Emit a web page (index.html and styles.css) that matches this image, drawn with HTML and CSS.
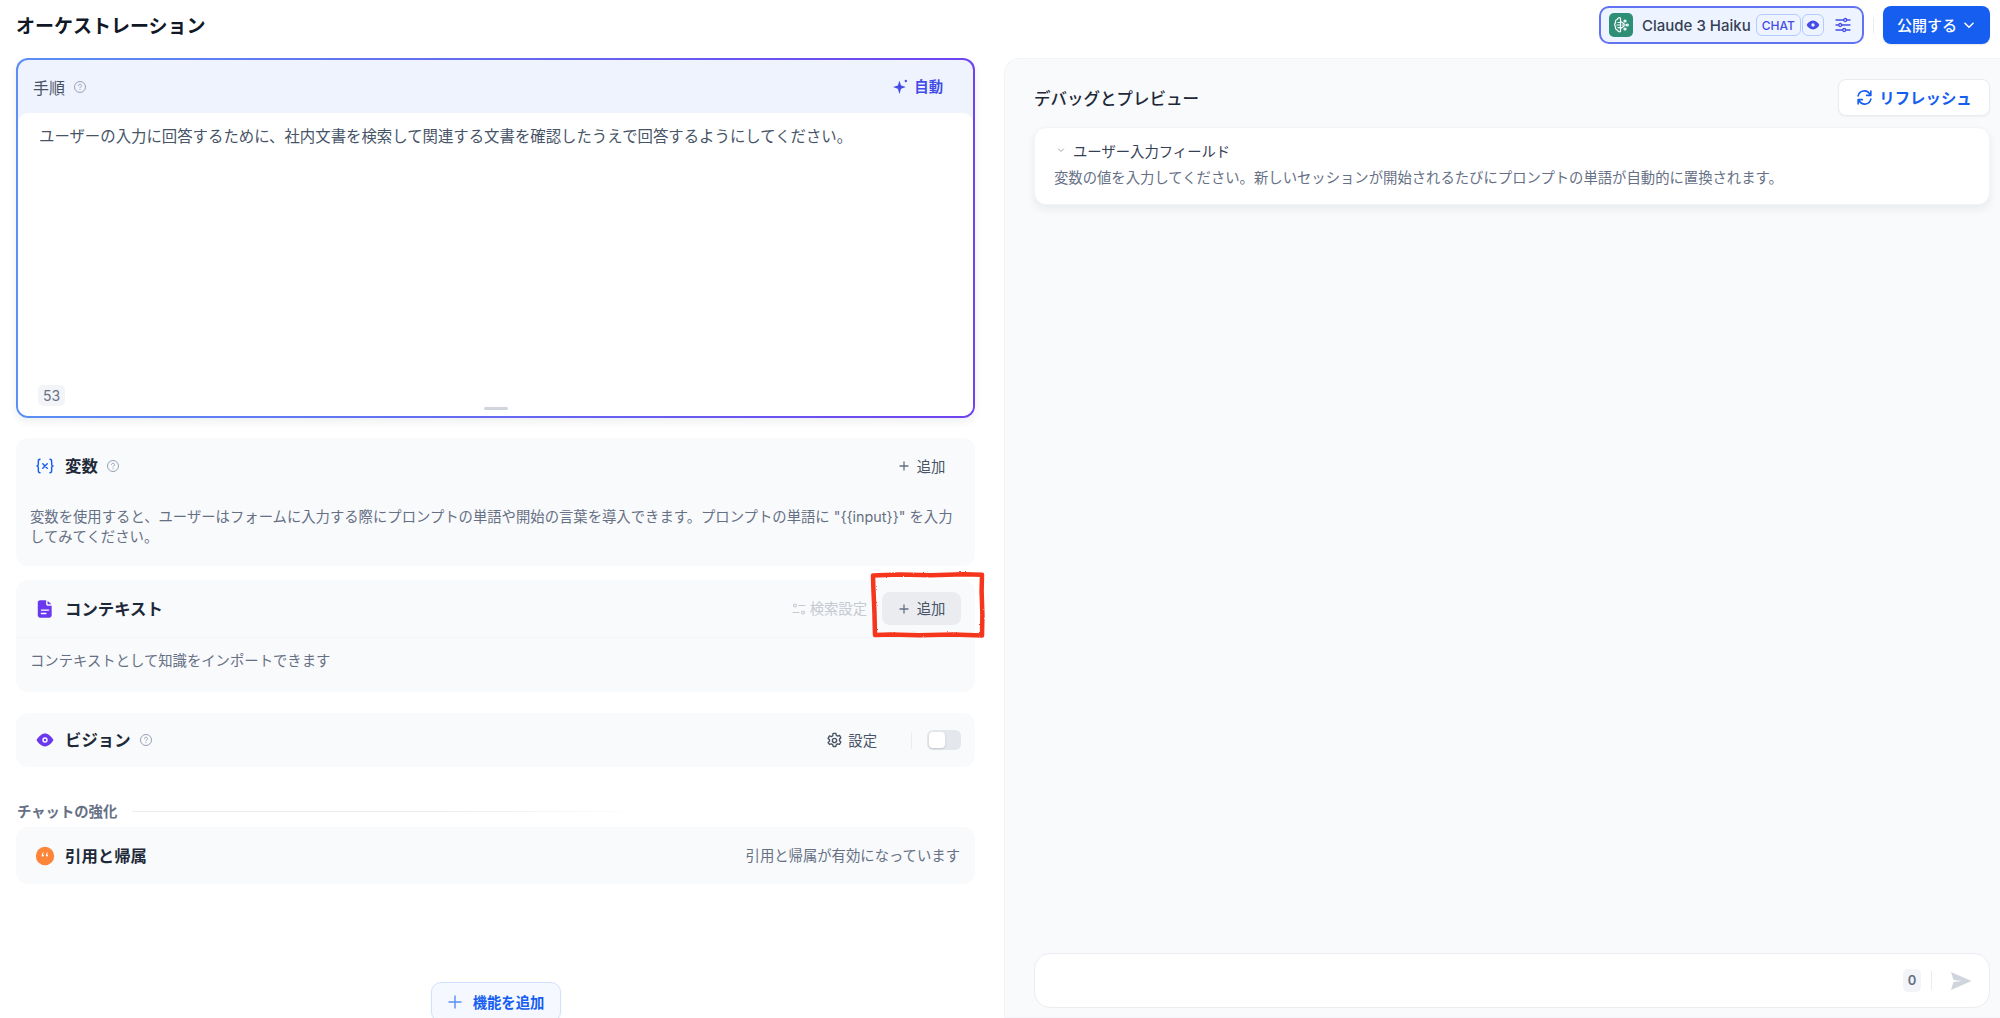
FILE: index.html
```html
<!DOCTYPE html>
<html lang="ja">
<head>
  <meta charset="utf-8">
  <title>オーケストレーション</title>
  <link rel="stylesheet" href="styles.css">
</head>
<body>
  <header class="topbar">
    <h1 class="page-title">オーケストレーション</h1>
    <div class="topbar-actions">
      <div class="model-pill">
        <span class="model-logo">
          <svg width="20" height="20" viewBox="0 0 20 20" fill="none" stroke="#fff" stroke-width="1.200" stroke-linecap="round" stroke-linejoin="round">
            <path d="M9.500 3C8 2.300 6.500 3 6.300 4.500 4.700 4.800 4 6.300 4.700 7.600 3.400 8.600 3.400 10.800 4.700 11.800 4 13.300 5 15 6.500 15c.4 1.500 2 2.200 3 1.500z"/>
            <path d="M7 7.500h2.500M6 10h3.500M7 12.700h2.500"/>
            <path d="M9.500 6.500 13 8.800M9.500 13.500 13 11.200M11 10h4"/>
            <circle cx="14" cy="6" r="1"/><circle cx="16.300" cy="10" r="1"/><circle cx="14" cy="14" r="1"/>
          </svg>
        </span>
        <span class="model-name">Claude 3 Haiku</span>
        <span class="model-tag">CHAT</span>
        <span class="model-tag model-tag-icon">
          <svg width="14" height="14" viewBox="0 0 14 14"><path fill="#444ce7" fill-rule="evenodd" d="M7 2.500c3 0 5.200 2.200 6.300 4.500-1.100 2.300-3.300 4.500-6.300 4.500S1.800 9.300.7 7C1.800 4.700 4 2.500 7 2.500zM7 5.300a1.700 1.700 0 1 0 0 3.400 1.700 1.700 0 0 0 0-3.400z"/></svg>
        </span>
        <svg class="model-sliders" width="16" height="16" viewBox="0 0 16 16" fill="none" stroke="#444ce7" stroke-width="1.300" stroke-linecap="round">
          <path d="M1 3h7.500M12 3h3M1 8h2.500M7 8h8M1 13h6.500M11 13h4"/>
          <circle cx="10.200" cy="3" r="1.500"/><circle cx="5.200" cy="8" r="1.500"/><circle cx="9.200" cy="13" r="1.500"/>
        </svg>
      </div>
      <span class="topbar-divider"></span>
      <button class="publish-btn"><span class="btn-text">公開する</span>
        <svg width="14" height="14" viewBox="0 0 12 12" fill="none" stroke="#fff" stroke-width="1.300" stroke-linecap="round" stroke-linejoin="round"><path d="M2.500 4.500 6 8l3.500-3.500"/></svg>
      </button>
    </div>
  </header>

  <main class="layout">
    <section class="config">
      <div class="prompt">
        <div class="prompt-inner">
          <div class="prompt-head">
            <span class="prompt-title">手順</span>
            <svg class="help" width="14" height="14" viewBox="0 0 14 14" fill="none" stroke="#98a2b3" stroke-width="1"><circle cx="7" cy="7" r="5.500"/><path d="M5.500 5.600C5.600 4.700 6.200 4.300 7 4.300c.9 0 1.500.5 1.500 1.300 0 1.200-1.500 1.200-1.500 2.300" stroke-linecap="round"/><path d="M7 9.700v.1" stroke-linecap="round"/></svg>
            <span class="auto-btn">
              <svg width="17" height="17" viewBox="0 0 16 16" fill="#444ce7"><path d="M7 2.500 8.500 7 13 8.500 8.500 10 7 15 5.500 10 1 8.500 5.500 7z"/><circle cx="13" cy="2.800" r="1.100"/></svg>
              <span class="btn-text">自動</span>
            </span>
          </div>
          <div class="prompt-body">
            <p class="prompt-text">ユーザーの入力に回答するために、社内文書を検索して関連する文書を確認したうえで回答するようにしてください。</p>
            <div class="prompt-foot">
              <span class="count">53</span>
            </div>
            <span class="drag-handle"></span>
          </div>
        </div>
      </div>

      <div class="card card-vars">
        <div class="card-head">
          <svg class="card-icon" width="20" height="20" viewBox="0 0 18 18" fill="none" stroke="#155eef" stroke-width="1.300" stroke-linecap="round" stroke-linejoin="round">
            <path d="M4.500 3C3 3 3 3.800 3 5v2.500C3 8.500 2.500 9 1.800 9c.7 0 1.200.5 1.200 1.500V13c0 1.200 0 2 1.500 2"/>
            <path d="M13.500 3C15 3 15 3.800 15 5v2.500c0 1 .5 1.500 1.200 1.500-.7 0-1.200.5-1.200 1.500V13c0 1.200 0 2-1.500 2"/>
            <path d="m7 7 4 4M11 7l-4 4"/>
          </svg>
          <span class="card-title">変数</span>
          <svg class="help" width="14" height="14" viewBox="0 0 14 14" fill="none" stroke="#98a2b3" stroke-width="1"><circle cx="7" cy="7" r="5.500"/><path d="M5.500 5.600C5.600 4.700 6.200 4.300 7 4.300c.9 0 1.500.5 1.500 1.300 0 1.200-1.500 1.200-1.500 2.300" stroke-linecap="round"/><path d="M7 9.700v.1" stroke-linecap="round"/></svg>
          <span class="add-btn">
            <svg width="12" height="12" viewBox="0 0 12 12" fill="none" stroke="#667085" stroke-width="1.300" stroke-linecap="round"><path d="M6 2v8M2 6h8"/></svg>
            <span class="btn-text">追加</span>
          </span>
        </div>
        <p class="card-desc card-desc-vars">変数を使用すると、ユーザーはフォームに入力する際にプロンプトの単語や開始の言葉を導入できます。プロンプトの単語に "{{input}}" を入力してみてください。</p>
      </div>

      <div class="card card-context">
        <div class="card-head card-head-line">
          <svg class="card-icon" width="20" height="20" viewBox="0 0 18 18">
            <path fill="#6938ef" d="M4.500 1.200H10v3.300c0 .9.700 1.600 1.600 1.600h3.400v8.600c0 1.100-.9 2.100-2 2.100H4.500c-1.100 0-2-1-2-2.100V3.200c0-1.100.9-2 2-2z"/>
            <path fill="#6938ef" d="M11.300 1.500 14.700 4.700h-2.900c-.3 0-.5-.2-.5-.5z"/>
            <path stroke="#fff" stroke-width="1.300" stroke-linecap="round" d="M5.800 10h6.400M5.800 13h4"/>
          </svg>
          <span class="card-title">コンテキスト</span>
          <span class="search-settings">
            <svg width="16" height="16" viewBox="0 0 16 16" fill="none" stroke="#c4c9d2" stroke-width="1.200" stroke-linecap="round"><circle cx="4" cy="4.500" r="1.500"/><path d="M8 4.500h6M2 11.500h6"/><circle cx="12" cy="11.500" r="1.500"/></svg>
            <span class="btn-text">検索設定</span>
          </span>
          <span class="add-btn add-btn-hover">
            <svg width="12" height="12" viewBox="0 0 12 12" fill="none" stroke="#667085" stroke-width="1.300" stroke-linecap="round"><path d="M6 2v8M2 6h8"/></svg>
            <span class="btn-text">追加</span>
          </span>
          <svg class="highlight" width="117" height="68" viewBox="0 0 117 68" fill="none" stroke="#f5341a" stroke-width="4.500" stroke-linejoin="round">
            <defs>
              <filter id="rough"><feTurbulence type="fractalNoise" baseFrequency=".7" numOctaves="2" seed="4"/><feDisplacementMap in="SourceGraphic" scale="2"/></filter>
            </defs>
            <path filter="url(#rough)" d="M4 4.500 30 3.500 62 4.200 95 3.300 113 3.800 112.600 20 113.400 44 113 64.500 84 63.600 50 64.200 22 63.400 6 64 5.400 40 4.400 18z"/>
          </svg>
        </div>
        <p class="card-desc">コンテキストとして知識をインポートできます</p>
      </div>

      <div class="card card-vision">
        <svg class="card-icon" width="20" height="20" viewBox="0 0 20 20"><path fill="#6938ef" fill-rule="evenodd" d="M10 3.500c1.600 0 2.800.6 4 1.400 1.800 1.200 3.300 2.900 4.500 5.100-1.200 2.200-2.700 3.900-4.500 5.100-1.200.8-2.400 1.400-4 1.400s-2.800-.6-4-1.400C4.200 13.900 2.700 12.200 1.500 10 2.700 7.800 4.200 6.100 6 4.900c1.200-.8 2.400-1.400 4-1.400zM10 7.300a2.700 2.700 0 1 0 0 5.400 2.700 2.700 0 0 0 0-5.400z"/><circle cx="10" cy="10" r="1.200" fill="#6938ef"/></svg>
        <span class="card-title">ビジョン</span>
        <svg class="help" width="14" height="14" viewBox="0 0 14 14" fill="none" stroke="#98a2b3" stroke-width="1"><circle cx="7" cy="7" r="5.500"/><path d="M5.500 5.600C5.600 4.700 6.200 4.300 7 4.300c.9 0 1.500.5 1.500 1.300 0 1.200-1.500 1.200-1.500 2.300" stroke-linecap="round"/><path d="M7 9.700v.1" stroke-linecap="round"/></svg>
        <span class="vision-settings">
          <svg width="17" height="17" viewBox="0 0 16 16" fill="none" stroke="#475467" stroke-width="1.300" stroke-linejoin="round"><path d="M6.700 1.300h2.600l.4 1.800 1.300.7 1.700-.6 1.300 2.300-1.300 1.200v1.500l1.300 1.200-1.300 2.300-1.700-.6-1.300.7-.4 1.800H6.700l-.4-1.800-1.300-.7-1.700.6L2 9.900l1.300-1.200V7.200L2 6l1.300-2.300 1.700.6 1.300-.7z"/><circle cx="8" cy="8" r="2"/></svg>
          <span class="btn-text">設定</span>
        </span>
        <span class="vision-divider"></span>
        <span class="toggle"><span class="toggle-thumb"></span></span>
      </div>

      <div class="section-label">
        <span class="btn-text">チャットの強化</span>
        <span class="section-line"></span>
      </div>

      <div class="card card-citation">
        <svg class="card-icon" width="20" height="20" viewBox="0 0 20 20"><circle cx="10" cy="10" r="9.200" fill="#fd853a"/><path fill="#fff" d="M8.700 5.800c-1 .9-2 2.200-2 3.500 0 .8.500 1.300 1.100 1.300.6 0 1-.4 1-1 0-.6-.4-1-.9-1 .1-.7.400-1.700.8-2.800zM12.900 5.800c-1 .9-2 2.200-2 3.500 0 .8.500 1.300 1.100 1.300.6 0 1-.4 1-1 0-.6-.4-1-.9-1 .1-.7.400-1.700.8-2.800z"/></svg>
        <span class="card-title">引用と帰属</span>
        <span class="citation-note btn-text">引用と帰属が有効になっています</span>
      </div>

      <button class="add-feature">
        <svg width="16" height="16" viewBox="0 0 16 16" fill="none" stroke="#5a8ef5" stroke-width="1.400" stroke-linecap="round"><path d="M8 2v12M2 8h12"/></svg>
        <span class="btn-text">機能を追加</span>
      </button>
    </section>

    <section class="debug">
      <div class="debug-head">
        <h2 class="debug-title">デバッグとプレビュー</h2>
        <button class="refresh-btn">
          <svg width="17" height="17" viewBox="0 0 16 16" fill="none" stroke="#155eef" stroke-width="1.500" stroke-linecap="round" stroke-linejoin="round"><path d="M2 6.500A6 6 0 0 1 12.800 4.400L14 6M14 2v4h-4M14 9.500A6 6 0 0 1 3.200 11.600L2 10M2 14v-4h4"/></svg>
          <span class="btn-text">リフレッシュ</span>
        </button>
      </div>
      <div class="inputs-card">
        <div class="inputs-head">
          <svg width="12" height="12" viewBox="0 0 12 12" fill="none" stroke="#98a2b3" stroke-width="1" stroke-linecap="round" stroke-linejoin="round"><path d="M3.500 5 6 7.500 8.500 5"/></svg>
          <span>ユーザー入力フィールド</span>
        </div>
        <p class="inputs-desc">変数の値を入力してください。新しいセッションが開始されるたびにプロンプトの単語が自動的に置換されます。</p>
      </div>
      <div class="chat-box">
        <span class="chat-count">0</span>
        <span class="chat-divider"></span>
        <svg width="22" height="20" viewBox="0 0 22 20"><path fill="#d0d5dd" d="M1 1 21.500 10 1 19 3.500 10.900 12 10 3.500 9.100z"/></svg>
      </div>
    </section>
  </main>
</body>
</html>
```

FILE: styles.css
```css
* {
  box-sizing: border-box;
}
html, body {
  height: 100%;
  margin: 0;
  overflow: hidden;
}
body {
  background: #fff;
  color: #354052;
  font-family: Inter, "Noto Sans CJK JP", sans-serif;
  font-size: 14.35px;
  display: flex;
  flex-direction: column;
}
button {
  font-family: inherit;
  cursor: pointer;
}
p, h1, h2 {
  margin: 0;
}
/* the CJK glyphs sit a little low in the line box */
.btn-text {
  position: relative;
  top: -1px;
}

/* top bar */
.topbar {
  height: 58px;
  flex: none;
  display: flex;
  align-items: center;
  justify-content: space-between;
  padding: 0 10px 8px 16px;
}
.page-title {
  font-size: 19px;
  font-weight: 600;
  color: #101828;
  margin-bottom: 2px;
}
.topbar-actions {
  display: flex;
  align-items: center;
}
.model-pill {
  width: 265px;
  height: 38px;
  display: flex;
  align-items: center;
  background: #eef4ff;
  border: 2px solid #6172f3;
  border-radius: 10px;
  padding-left: 8px;
}
.model-logo {
  width: 24px;
  height: 24px;
  border-radius: 5px;
  background: #2f8f76;
  display: flex;
  align-items: center;
  justify-content: center;
}
.model-name {
  margin-left: 9px;
  font-weight: 500;
  font-size: 15px;
  color: #344054;
  white-space: nowrap;
}
.model-tag {
  height: 22px;
  margin-left: 5px;
  padding: 0 5px;
  display: flex;
  align-items: center;
  border: 1px solid #b2ccff;
  border-radius: 6px;
  color: #444ce7;
  font-size: 12px;
  font-weight: 500;
}
.model-tag-icon {
  margin-left: 1px;
  padding: 0 3px;
  width: 22px;
}
.model-sliders {
  margin-left: 11px;
}
.topbar-divider {
  width: 1px;
  height: 17px;
  background: #eaecf0;
  margin: 0 9px;
}
.publish-btn {
  width: 107px;
  height: 38px;
  background: #155eef;
  color: #fff;
  border: 0;
  border-radius: 8px;
  font-size: 15px;
  font-weight: 500;
  display: flex;
  align-items: center;
  justify-content: center;
  gap: 5px;
  box-shadow: 0 1px 2px rgba(16, 24, 40, .1);
}

/* layout */
.layout {
  flex: 1;
  display: flex;
  min-height: 0;
}
.config {
  width: 1004px;
  flex: none;
  padding: 0 29px 0 16px;
  display: flex;
  flex-direction: column;
  overflow: hidden;
}

/* prompt */
.prompt {
  height: 360px;
  flex: none;
  padding: 2px;
  border-radius: 12px;
  background: linear-gradient(90deg, #5b8ff5 0%, #6f43f0 100%);
  box-shadow: 0 4px 8px rgba(16, 24, 40, .07);
}
.prompt-inner {
  height: 100%;
  border-radius: 10px;
  background: #eef3fe;
  display: flex;
  flex-direction: column;
}
.prompt-head {
  height: 53px;
  flex: none;
  display: flex;
  align-items: center;
  padding: 0 30px 0 15px;
}
.prompt-title {
  font-size: 16px;
  color: #475467;
}
.help {
  margin-left: 8px;
}
.auto-btn {
  margin-left: auto;
  display: flex;
  align-items: center;
  gap: 5px;
  color: #444ce7;
  font-weight: 600;
}
.prompt-body {
  position: relative;
  flex: 1;
  background: #fff;
  border-radius: 10px;
  padding: 13px 21px 0;
  display: flex;
  flex-direction: column;
}
.prompt-text {
  font-size: 15.4px;
  line-height: 22px;
  color: #475467;
}
.prompt-foot {
  margin-top: auto;
  padding-bottom: 10px;
}
.count {
  display: inline-block;
  margin-left: -1px;
  width: 27px;
  height: 21px;
  line-height: 21px;
  text-align: center;
  background: #f2f4f7;
  border-radius: 5px;
  color: #667085;
  font-size: 14px;
}
.drag-handle {
  position: absolute;
  left: 466px;
  bottom: 6px;
  width: 24px;
  height: 3px;
  border-radius: 2px;
  background: #d0d5dd;
}

/* feature cards */
.card {
  flex: none;
  background: #f9fafb;
  border-radius: 12px;
}
.card-vars {
  margin-top: 20px;
  height: 128px;
}
.card-context {
  margin-top: 14px;
  height: 112px;
}
.card-head {
  position: relative;
  height: 56px;
  display: flex;
  align-items: center;
  padding: 0 14px 0 19px;
}
.card-head-line {
  height: 58px;
  border-bottom: 1px solid #f2f4f7;
}
.card-icon {
  flex: none;
}
.card-title {
  position: relative;
  top: -1px;
  margin-left: 10px;
  font-size: 16.4px;
  font-weight: 600;
  color: #1d2939;
}
.add-btn {
  margin-left: auto;
  width: 79px;
  height: 33px;
  display: flex;
  align-items: center;
  justify-content: center;
  gap: 7px;
  border-radius: 8px;
  color: #475467;
}
.add-btn-hover {
  margin-left: 15px;
  background: #eaecf0;
}
.card-desc {
  padding: 13px 14px 0;
  line-height: 20px;
  color: #667085;
}
.card-desc-vars {
  padding: 13px 20px 0 14px;
}
.search-settings {
  margin-left: auto;
  display: flex;
  align-items: center;
  gap: 3px;
  color: #c4c9d2;
}
.highlight {
  position: absolute;
  left: 853px;
  top: -9px;
}
.card-vision {
  margin-top: 21px;
  height: 54px;
  display: flex;
  align-items: center;
  padding: 0 14px 0 19px;
}
.vision-settings {
  margin-left: auto;
  display: flex;
  align-items: center;
  gap: 5px;
  color: #475467;
}
.vision-divider {
  width: 1px;
  height: 17px;
  background: #eaecf0;
  margin: 0 15px 0 34px;
}
.toggle {
  width: 34px;
  height: 20px;
  padding: 2px;
  border-radius: 6px;
  background: #e4e7ec;
}
.toggle-thumb {
  display: block;
  width: 16px;
  height: 16px;
  border-radius: 4px;
  background: #fff;
  box-shadow: 0 1px 2px rgba(16, 24, 40, .15);
}
.section-label {
  margin-top: 33px;
  height: 22px;
  flex: none;
  display: flex;
  align-items: center;
  gap: 15px;
  font-weight: 600;
  color: #667085;
  padding-left: 1px;
}
.section-line {
  width: 520px;
  height: 1px;
  background: linear-gradient(90deg, #eaecf0 60%, #fff);
}
.card-citation {
  margin-top: 5px;
  height: 57px;
  display: flex;
  align-items: center;
  padding: 0 15px 0 19px;
}
.citation-note {
  margin-left: auto;
  color: #667085;
}
.add-feature {
  flex: none;
  align-self: center;
  margin-top: 98px;
  width: 130px;
  height: 40px;
  display: flex;
  align-items: center;
  justify-content: center;
  gap: 10px;
  background: #f5f8ff;
  border: 1px solid #d1e0ff;
  border-radius: 10px;
  color: #155eef;
  font-size: 14.35px;
  font-weight: 600;
  box-shadow: 0 1px 2px rgba(16, 24, 40, .05);
}

/* debug panel */
.debug {
  flex: 1;
  display: flex;
  flex-direction: column;
  padding: 20px 10px 9px 29px;
  background: #f9fafb;
  border: 1px solid #f2f4f7;
  border-right: 0;
  border-radius: 16px 0 0 0;
}
.debug-head {
  height: 37px;
  flex: none;
  display: flex;
  align-items: center;
  justify-content: space-between;
}
.debug-title {
  font-size: 16.5px;
  font-weight: 500;
  color: #1d2939;
}
.refresh-btn {
  width: 152px;
  height: 37px;
  display: flex;
  align-items: center;
  justify-content: center;
  gap: 6px;
  background: #fff;
  border: 1px solid #eaecf0;
  border-radius: 8px;
  color: #155eef;
  font-size: 15.4px;
  font-weight: 600;
  box-shadow: 0 1px 2px rgba(16, 24, 40, .05);
}
.inputs-card {
  margin-top: 11px;
  height: 78px;
  flex: none;
  background: #fff;
  border: 1px solid #f2f4f7;
  border-radius: 12px;
  box-shadow: 0 4px 8px rgba(16, 24, 40, .07);
  padding: 12px 19px 0;
}
.inputs-head {
  display: flex;
  align-items: center;
  gap: 6px;
  margin-left: 1px;
  height: 20px;
  color: #344054;
}
.inputs-desc {
  margin-top: 8px;
  line-height: 20px;
  color: #667085;
}
.chat-box {
  margin-top: auto;
  height: 55px;
  flex: none;
  display: flex;
  align-items: center;
  justify-content: flex-end;
  background: #fff;
  border: 1px solid #eaecf0;
  border-radius: 16px;
  padding-right: 17px;
}
.chat-count {
  width: 18px;
  height: 23px;
  line-height: 23px;
  text-align: center;
  background: #f2f4f7;
  border-radius: 5px;
  color: #667085;
  font-size: 13px;
  font-weight: 600;
}
.chat-divider {
  width: 1px;
  height: 19px;
  background: #eaecf0;
  margin: 0 18px 0 10px;
}
```
